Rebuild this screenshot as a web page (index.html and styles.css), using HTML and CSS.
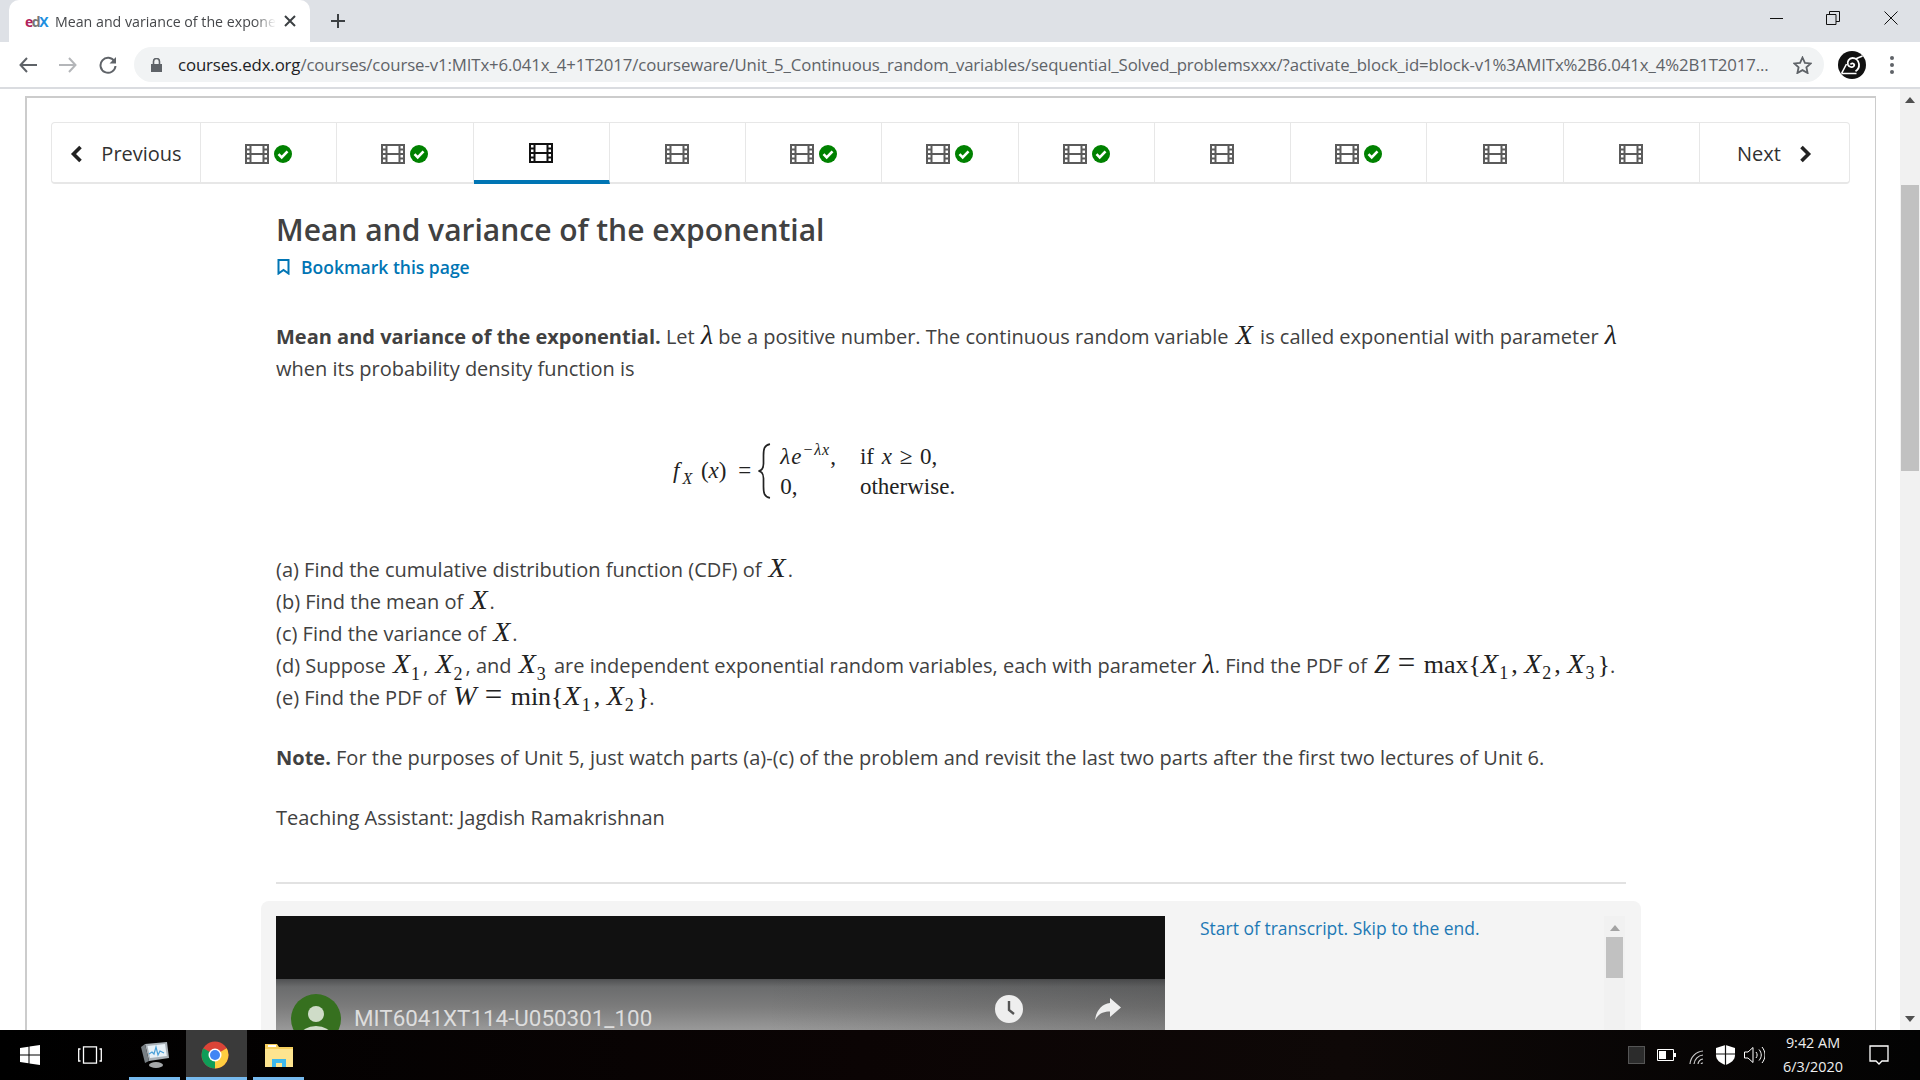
FILE: index.html
```html
<!DOCTYPE html>
<html lang="en">

<head>
    <meta charset="UTF-8">
    <title>Mean and variance of the exponential</title>
    <link rel="stylesheet" href="styles.css">
</head>

<body>
    <svg class="defs" width="0" height="0">
        <symbol id="film" viewBox="0 0 24 20">
            <path d="M1 1h22v18H1z M5.500 1v18 M18.500 1v18 M5.500 10h13 M1 5.500h4.500 M1 10h4.500 M1 14.500h4.500 M18.500 5.500H23 M18.500 10H23 M18.500 14.500H23" fill="none" stroke="currentColor" stroke-width="2"/>
        </symbol>
        <symbol id="check" viewBox="0 0 18 18">
            <circle cx="9" cy="9" r="9" fill="#008100"/>
            <path d="M4.500 9.200l3.200 3.200 5.800-6" fill="none" stroke="#fff" stroke-width="2.600"/>
        </symbol>
    </svg>

    <!-- browser chrome -->
    <div class="tabstrip">
        <div class="tab">
            <span class="favicon"><span class="fav-e">e</span><span class="fav-d">d</span><span class="fav-x">X</span></span>
            <span class="tab-title">Mean and variance of the expone</span>
            <svg class="tab-close" width="12" height="12" viewBox="0 0 12 12"><path d="M1 1l10 10M11 1L1 11" stroke="#3c4043" stroke-width="2"/></svg>
        </div>
        <svg class="new-tab" width="16" height="16" viewBox="0 0 16 16"><path d="M8 1v14M1 8h14" stroke="#3c4043" stroke-width="2"/></svg>
        <div class="win-controls">
            <svg class="win-min" width="14" height="14" viewBox="0 0 14 14"><path d="M0 7.500h13" stroke="#111" stroke-width="1"/></svg>
            <svg width="14" height="14" viewBox="0 0 14 14"><path d="M.5 3.500h9.500v10H.5z M3.500 3.500V.5h10v10H10" fill="none" stroke="#111"/></svg>
            <svg width="14" height="14" viewBox="0 0 14 14"><path d="M.5.5l13 13M13.500.5l-13 13" stroke="#111"/></svg>
        </div>
    </div>

    <div class="toolbar">
        <svg class="tb-icon" width="18" height="16" viewBox="0 0 18 16"><path d="M8 1L1.500 8 8 15M2 8h16" fill="none" stroke="#5f6368" stroke-width="2"/></svg>
        <svg class="tb-icon" width="18" height="16" viewBox="0 0 18 16"><path d="M10 1l6.500 7-6.500 7M16 8H0" fill="none" stroke="#b4b6b9" stroke-width="2"/></svg>
        <svg class="tb-icon" width="18" height="18" viewBox="0 0 18 18"><path d="M15.500 5.500A7.500 7.500 0 1 0 16.500 10" fill="none" stroke="#5f6368" stroke-width="2"/><path d="M17 1v6.500h-6.500z" fill="#5f6368"/></svg>
        <div class="omnibox">
            <svg class="lock" width="11" height="14" viewBox="0 0 11 14"><path d="M0 6h11v8H0z" fill="#5f6368"/><path d="M2.500 6V3.500a3 3 0 0 1 6 0V6" fill="none" stroke="#5f6368" stroke-width="1.600"/></svg>
            <span class="url"><span class="url-host">courses.edx.org</span>/courses/course-v1:MITx+6.041x_4+1T2017/courseware/Unit_5_Continuous_random_variables/sequential_Solved_problemsxxx/?activate_block_id=block-v1%3AMITx%2B6.041x_4%2B1T2017...</span>
            <svg class="star" width="19" height="18" viewBox="0 0 19 18"><path d="M9.500 1.500l2.400 5.300 5.800.6-4.300 3.900 1.200 5.700-5.100-2.900-5.100 2.900 1.200-5.700L1.300 7.400l5.800-.6z" fill="none" stroke="#5f6368" stroke-width="1.800"/></svg>
        </div>
        <svg class="profile" width="28" height="28" viewBox="0 0 28 28">
            <circle cx="14" cy="14" r="14" fill="#111"/>
            <path d="M3.500 22.500L8.500 13M3.500 22.500h15" fill="none" stroke="#fff" stroke-width="1.600"/>
            <path d="M12.500 13.500a2 2 0 0 1 3.800.5c-.3 2.500-4.800 3.200-6.300-.2-1.200-3 1-6.800 4.500-6.800 3.200 0 6 2.300 6.500 6 .3 3-1.500 6-3.500 7.200 M18.500 7.500l6-2.500" fill="none" stroke="#fff" stroke-width="1.800"/>
        </svg>
        <div class="kebab"><i></i><i></i><i></i></div>
    </div>

    <div class="viewport">
        <div class="page">
            <div class="sheet">
                <nav class="seq-nav">
                    <div class="seq-btn seq-prev">
                        <svg width="13" height="18" viewBox="0 0 13 18"><path d="M10.500 2L3.500 9l7 7" fill="none" stroke="#222" stroke-width="3.600"/></svg>
                        <span>Previous</span>
                    </div>
                    <div class="seq-item"><svg class="film"><use href="#film"/></svg><svg class="ok"><use href="#check"/></svg></div>
                    <div class="seq-item"><svg class="film"><use href="#film"/></svg><svg class="ok"><use href="#check"/></svg></div>
                    <div class="seq-item active"><svg class="film"><use href="#film"/></svg></div>
                    <div class="seq-item"><svg class="film"><use href="#film"/></svg></div>
                    <div class="seq-item"><svg class="film"><use href="#film"/></svg><svg class="ok"><use href="#check"/></svg></div>
                    <div class="seq-item"><svg class="film"><use href="#film"/></svg><svg class="ok"><use href="#check"/></svg></div>
                    <div class="seq-item"><svg class="film"><use href="#film"/></svg><svg class="ok"><use href="#check"/></svg></div>
                    <div class="seq-item"><svg class="film"><use href="#film"/></svg></div>
                    <div class="seq-item"><svg class="film"><use href="#film"/></svg><svg class="ok"><use href="#check"/></svg></div>
                    <div class="seq-item"><svg class="film"><use href="#film"/></svg></div>
                    <div class="seq-item"><svg class="film"><use href="#film"/></svg></div>
                    <div class="seq-btn seq-next">
                        <span>Next</span>
                        <svg width="13" height="18" viewBox="0 0 13 18"><path d="M2.500 2l7 7-7 7" fill="none" stroke="#222" stroke-width="3.600"/></svg>
                    </div>
                </nav>

                <div class="unit">
                    <h1>Mean and variance of the exponential</h1>
                    <div class="bookmark">
                        <svg width="13" height="16" viewBox="0 0 13 16"><path d="M1.500 1h10v13.500l-5-3.500-5 3.500z" fill="none" stroke="#0075b4" stroke-width="2"/></svg>
                        <span>Bookmark this page</span>
                    </div>

                    <p class="intro"><b>Mean and variance of the exponential.</b> Let <span class="m lam">λ</span> be a positive number. The continuous random variable <span class="m">X</span> is called exponential with parameter <span class="m lam">λ</span> when its probability density function is</p>

                    <div class="formula">
                        <div class="f-lhs"><i class="f-f">f<sub>X</sub></i> (<i>x</i>) <span class="f-eq">=</span></div>
                        <svg class="brace" width="14" height="56" viewBox="0 0 14 54" preserveAspectRatio="none"><path d="M13 1C7 2 6.500 6 6.500 12v8c0 4-2 6.500-5 7 3 .5 5 3 5 7v8c0 6 .5 10 6.500 11" fill="none" stroke="#222" stroke-width="1.700"/></svg>
                        <div class="f-cases">
                            <div><i class="f-exp">λe<sup>−λx</sup></i>,</div>
                            <div class="f-cond">if <i>x</i> ≥ 0,</div>
                            <div>0,</div>
                            <div>otherwise.</div>
                        </div>
                    </div>

                    <ul class="parts">
                        <li>(a) Find the cumulative distribution function (CDF) of <span class="m">X</span>.</li>
                        <li>(b) Find the mean of <span class="m">X</span>.</li>
                        <li>(c) Find the variance of <span class="m">X</span>.</li>
                        <li>(d) Suppose <span class="m">X<sub>1</sub></span>, <span class="m">X<sub>2</sub></span>, and <span class="m">X<sub>3</sub></span> are independent exponential random variables, each with parameter <span class="m lam">λ</span>. Find the PDF of <span class="m">Z</span> <span class="mr"><span class="eq">=</span> max{<i>X</i><sub>1</sub>, <i>X</i><sub>2</sub>, <i>X</i><sub>3</sub>}</span>.</li>
                        <li>(e) Find the PDF of <span class="m">W</span> <span class="mr"><span class="eq">=</span> min{<i>X</i><sub>1</sub>, <i>X</i><sub>2</sub>}</span>.</li>
                    </ul>

                    <p class="note"><b>Note.</b> For the purposes of Unit 5, just watch parts (a)-(c) of the problem and revisit the last two parts after the first two lectures of Unit 6.</p>
                    <p class="ta">Teaching Assistant: Jagdish Ramakrishnan</p>
                    <hr>

                    <div class="video-wrap">
                        <div class="video">
                            <div class="video-black"></div>
                            <div class="video-bar">
                                <svg class="yt-avatar" width="50" height="50" viewBox="0 0 50 50"><circle cx="25" cy="25" r="25" fill="#36701f"/><circle cx="25" cy="20" r="8" fill="#cfdcc8"/><ellipse cx="25" cy="41" rx="15" ry="9" fill="#cfdcc8"/></svg>
                                <span class="yt-title">MIT6041XT114-U050301_100</span>
                                <svg class="yt-clock" width="28" height="28" viewBox="0 0 28 28"><circle cx="14" cy="14" r="14" fill="#eee"/><path d="M14 6v9l5 4" fill="none" stroke="#555" stroke-width="2.400"/></svg>
                                <svg class="yt-share" width="26" height="22" viewBox="0 0 26 22"><path d="M15 0l11 9.500L15 19v-5.500C9 13.500 4 15 0 22 1.500 12 7 6 15 5z" fill="#eee"/></svg>
                            </div>
                        </div>
                        <div class="transcript">
                            <a class="skip">Start of transcript. Skip to the end.</a>
                        </div>
                        <div class="mini-scroll">
                            <div class="arrow-up small"></div>
                            <div class="mini-thumb"></div>
                        </div>
                    </div>
                </div>
            </div>
        </div>
        <div class="scrollbar">
            <div class="arrow-up"></div>
            <div class="thumb"></div>
            <div class="arrow-down"></div>
        </div>
    </div>

    <!-- windows taskbar -->
    <div class="taskbar">
        <svg class="tk-start" width="20" height="20" viewBox="0 0 20 20"><path d="M0 3l8.500-1.200v7.700H0z M9.500 1.600L20 0v9.500H9.500z M0 10.500h8.500v7.700L0 17z M9.500 10.500H20V20L9.500 18.400z" fill="#fff"/></svg>
        <svg class="tk-view" width="24" height="18" viewBox="0 0 24 18"><path d="M5.500.8h13v16.400h-13z M2.500 3H.7v12h1.800 M21.500 3h1.800v12h-1.800" fill="none" stroke="#fff" stroke-width="1.300"/></svg>
        <div class="tk-app tk-first">
            <svg width="28" height="26" viewBox="0 0 28 26">
                <path d="M4 2l22-2 2 16-20 3z" fill="#aab2b8"/><path d="M6.500 4l17.500-2 1.800 12-16.800 2z" fill="#e8f1f7"/>
                <path d="M8 12l3-2 2 2 2-7 2 8 2-4 4 2" fill="none" stroke="#4ba0d8" stroke-width="1.200"/>
                <path d="M0 5l4-3 4 17-4 2z" fill="#777e83"/><ellipse cx="15" cy="23" rx="7" ry="3" fill="#a5a8aa"/>
            </svg>
        </div>
        <div class="tk-app tk-active">
            <svg width="28" height="28" viewBox="0 0 28 28">
                <circle cx="14" cy="14" r="13.500" fill="#db4437"/>
                <path d="M14 14L2.300 7.300A13.500 13.500 0 0 0 14 27.500z" fill="#0f9d58"/>
                <path d="M14 14V27.500A13.500 13.500 0 0 0 25.700 7.300z" fill="#ffcd40"/>
                <circle cx="14" cy="14" r="6.500" fill="#fff"/><circle cx="14" cy="14" r="5" fill="#4285f4"/>
            </svg>
        </div>
        <div class="tk-app">
            <svg width="28" height="24" viewBox="0 0 28 24">
                <path d="M0 1h12l2 3h14v20H0z" fill="#f6cf5d"/><path d="M0 6h28v18H0z" fill="#fde48f"/>
                <path d="M3 2h8v2H3z" fill="#fff"/>
                <path d="M7 24v-8h14v8h-4v-4h-6v4z" fill="#3db8ec"/>
            </svg>
        </div>

        <div class="tray">
            <div class="tray-box"></div>
            <svg width="19" height="12" viewBox="0 0 19 12"><path d="M.5.500h16v11H.5z" fill="none" stroke="#fff"/><path d="M17 4h2v4h-2z M2 2h7v8H2z" fill="#fff"/></svg>
            <svg width="16" height="17" viewBox="0 0 16 17"><path d="M1 16a2 2 0 0 1 2 1 M1 12a6 6 0 0 1 5 5 M1 8a10 10 0 0 1 9 9 M1 4a14 14 0 0 1 13 13" fill="none" stroke="#ccc" stroke-width="1.200" transform="matrix(-1 0 0 1 16 0)"/></svg>
            <svg width="19" height="20" viewBox="0 0 19 20"><path d="M9.500 0L19 3v7c0 5-4 8-9.500 10C4 18 0 15 0 10V3z" fill="#fff"/><path d="M9.500 0v20M0 9h19" stroke="#111" stroke-width="1.200"/></svg>
            <svg class="tray-vol" width="21" height="18" viewBox="0 0 21 18"><path d="M.5 6h3.500l5-4.500v15L4 12H.5z M12 6c1.500 2 1.500 4 0 6 M15 3.500c3 3.500 3 7.500 0 11 M18 1c4 5 4 11 0 16" fill="none" stroke="#fff"/></svg>
        </div>
        <div class="clock"><span>9:42 AM</span><span>6/3/2020</span></div>
        <svg class="notify" width="20" height="20" viewBox="0 0 20 20"><path d="M1 1h18v15h-6l-3 3-3-3H1z" fill="none" stroke="#fff" stroke-width="1.300"/></svg>
    </div>
</body>

</html>
```

FILE: styles.css
```css
html,
body {
    margin: 0;
    padding: 0;
    height: 100%;
    overflow: hidden;
}

body {
    display: flex;
    flex-direction: column;
    width: 1920px;
    height: 1080px;
    font-family: "Open Sans", sans-serif;
    color: #414141;
    background: #fff;
}

.defs {
    position: absolute;
}

/* browser chrome */
.tabstrip {
    flex: none;
    height: 42px;
    display: flex;
    align-items: center;
    background: #dee1e6;
    padding-left: 9px;
}

.tab {
    width: 301px;
    height: 42px;
    box-sizing: border-box;
    padding: 0 14px 0 16px;
    display: flex;
    align-items: center;
    background: #fff;
    border-radius: 10px 10px 0 0;
}

.favicon {
    width: 30px;
    flex: none;
    font-size: 14px;
    font-weight: 700;
    letter-spacing: -1.500px;
}

.fav-e {
    color: #b0215c;
}

.fav-d {
    color: #777;
}

.fav-x {
    color: #1d8fe0;
}

.tab-title {
    flex: 1;
    overflow: hidden;
    white-space: nowrap;
    font-size: 14.200px;
    color: #45474a;
    -webkit-mask-image: linear-gradient(to right, #000 90%, transparent 100%);
    mask-image: linear-gradient(to right, #000 90%, transparent 100%);
}

.tab-close {
    margin-left: 8px;
    flex: none;
}

.new-tab {
    margin-left: 20px;
}

.win-controls {
    margin-left: auto;
    margin-bottom: 6px;
    padding-right: 22px;
    display: flex;
    gap: 44px;
}

.win-min {
    margin-right: -2px;
}

.toolbar {
    flex: none;
    height: 45px;
    box-sizing: content-box;
    display: flex;
    align-items: center;
    background: #fff;
    border-bottom: 2px solid #dadce0;
    padding-left: 19px;
}

.tb-icon {
    margin-right: 22px;
    flex: none;
}

.omnibox {
    margin-left: -5px;
    width: 1690px;
    height: 35px;
    box-sizing: border-box;
    padding: 0 12px 0 17px;
    display: flex;
    align-items: center;
    background: #f1f3f4;
    border-radius: 18px;
}

.lock {
    flex: none;
    margin-right: 16px;
}

.url {
    flex: 1;
    white-space: nowrap;
    overflow: hidden;
    font-size: 16.800px;
    letter-spacing: -0.113px;
    color: #5f6368;
}

.url-host {
    color: #202124;
}

.star {
    flex: none;
    margin-left: 22px;
}

.profile {
    flex: none;
    margin-left: 14px;
}

.kebab {
    margin-left: 24px;
    display: flex;
    flex-direction: column;
    gap: 3px;
}

.kebab i {
    width: 4px;
    height: 4px;
    border-radius: 50%;
    background: #5f6368;
}

/* page area */
.viewport {
    flex: 1;
    min-height: 0;
    display: flex;
    overflow: hidden;
}

.page {
    flex: 1;
    padding: 7px 24px 0 25px;
    min-width: 0;
}

.sheet {
    height: 100%;
    border: 1px solid #ccc;
    border-width: 2px 1px 0 2px;
    box-sizing: border-box;
    padding: 24px 25px 0 24px;
}

.seq-nav {
    display: flex;
    height: 62px;
    box-sizing: border-box;
    border: 1px solid #e7e7e7;
    border-bottom-width: 2px;
    border-radius: 4px;
}

.seq-btn {
    width: 149px;
    flex: none;
    display: flex;
    align-items: center;
    justify-content: center;
    gap: 18px;
    padding-top: 2px;
    box-sizing: border-box;
    font-size: 20px;
    color: #313131;
}

.seq-prev {
    border-right: 1px solid #e7e7e7;
}

.seq-item {
    flex: 1;
    display: flex;
    align-items: center;
    justify-content: center;
    gap: 5px;
    color: #5b5b5b;
    border-right: 1px solid #e7e7e7;
    margin-bottom: -2px;
    box-sizing: border-box;
}

.seq-item.active {
    color: #111;
    border-bottom: 4px solid #0075b4;
    padding-top: 2px;
    padding-bottom: 0;
}

.film {
    width: 24px;
    height: 20px;
}

.ok {
    width: 18px;
    height: 18px;
}

.unit {
    margin-left: 225px;
    width: 1350px;
}

h1 {
    margin: 28px 0 0;
    font-size: 30px;
    line-height: 36px;
    font-weight: 600;
    color: #414141;
}

.bookmark {
    margin-top: 6px;
    height: 26px;
    display: flex;
    align-items: center;
    gap: 11px;
    font-size: 17.500px;
    font-weight: 600;
    color: #0075b4;
}

.bookmark svg {
    margin-left: 1px;
}

p {
    margin: 0;
    font-size: 20px;
    line-height: 32px;
}

p b {
    font-weight: 700;
}

.intro {
    margin-top: 41px;
}

/* math is set by hand in the serif, spaced out to the width of the TeX glyphs */
.m,
.mr,
.formula {
    font-family: "Liberation Serif", serif;
}

.m,
.mr {
    line-height: 0;
    color: #222;
}

.m {
    font-size: 28px;
    font-style: italic;
    padding-left: 2px;
    letter-spacing: 2px;
}

.m.lam {
    padding-left: 1px;
    letter-spacing: 0;
}

.mr {
    font-size: 26px;
}

.mr i {
    font-size: 28px;
    letter-spacing: 2px;
}

.eq {
    margin: 0 2px 0 1px;
    font-size: 31px;
}

.m sub,
.mr sub {
    margin-left: -1px;
    padding-right: 3px;
    font-size: 18px;
    font-style: normal;
    line-height: 0;
    letter-spacing: 0;
}

.formula {
    height: 169px;
    box-sizing: border-box;
    padding: 3px 0 0 397px;
    display: flex;
    align-items: center;
    font-size: 23px;
    color: #222;
}

.f-lhs sub {
    font-size: 16px;
    line-height: 0;
}

.f-f {
    letter-spacing: 3px;
}

.f-eq {
    margin-left: 6px;
}

.f-lhs {
    margin-right: 6px;
}

.f-cases {
    margin-left: 9px;
    display: grid;
    grid-template-columns: auto auto;
    column-gap: 24px;
    row-gap: 3px;
    line-height: 27px;
}

.f-exp {
    letter-spacing: 1px;
}

.f-cases sup {
    font-size: 16px;
    line-height: 0;
}

.f-cond {
    word-spacing: 2px;
}

.parts {
    list-style: none;
    margin: 0;
    padding: 0;
    font-size: 20px;
    line-height: 32px;
}

.note {
    margin-top: 28px;
}

.ta {
    margin-top: 28px;
}

hr {
    margin: 48px 0 0;
    border: 0;
    border-top: 2px solid #e2e2e2;
}

.video-wrap {
    margin: 17px -15px 0;
    padding: 15px 16px 15px 15px;
    height: 300px;
    box-sizing: border-box;
    display: flex;
    background: #f4f4f4;
    border-radius: 8px;
}

.video {
    width: 889px;
    flex: none;
    background: #777;
}

.video-black {
    height: 63px;
    background: #111;
}

.video-bar {
    height: 200px;
    padding: 15px 0 0 15px;
    box-sizing: border-box;
    display: flex;
    align-items: flex-start;
    background: linear-gradient(90deg, rgba(40, 40, 40, 0) 55%, rgba(40, 40, 40, .22) 100%),
        linear-gradient(#4f5052, #6b6c6d 4%, #7c7c7c 14%, #9a9a9a 26%);
}

.yt-title {
    margin: 13px 0 0 13px;
    font-family: Roboto, sans-serif;
    font-size: 22.400px;
    line-height: 22px;
    color: #ddd;
    white-space: nowrap;
}

.yt-clock {
    margin: 1px 0 0 343px;
}

.yt-share {
    margin: 4px 0 0 72px;
}

.transcript {
    flex: 1;
    padding: 0 0 0 35px;
}

.skip {
    display: block;
    margin-top: -1px;
    font-size: 17.500px;
    line-height: 26px;
    color: #1d79b5;
}

.mini-scroll {
    width: 21px;
    flex: none;
    background: #f1f1f1;
    display: flex;
    flex-direction: column;
    align-items: center;
}

.arrow-up,
.arrow-down {
    width: 0;
    height: 0;
    border-left: 5px solid transparent;
    border-right: 5px solid transparent;
}

.arrow-up {
    border-bottom: 6px solid #505050;
}

.arrow-down {
    border-top: 6px solid #505050;
}

.arrow-up.small {
    margin-top: 9px;
    border-bottom-color: #a3a3a3;
}

.mini-thumb {
    margin-top: 6px;
    width: 17px;
    height: 41px;
    background: #c1c1c1;
}

.scrollbar {
    flex: none;
    width: 20px;
    background: #f1f1f1;
    display: flex;
    flex-direction: column;
    align-items: center;
    box-sizing: border-box;
    padding: 8px 0;
}

.thumb {
    margin-top: 82px;
    width: 18px;
    height: 286px;
    background: #c1c1c1;
}

.arrow-down {
    margin-top: auto;
}

/* taskbar */
.taskbar {
    flex: none;
    height: 50px;
    display: flex;
    align-items: center;
    background: linear-gradient(90deg, #000 0, #0b0404 45%, #0e0807 70%, #030303 100%);
    color: #fff;
}

.tk-start {
    margin-left: 20px;
    flex: none;
}

.tk-view {
    margin-left: 38px;
    margin-right: 27px;
    flex: none;
}

.tk-app {
    width: 51px;
    height: 50px;
    box-sizing: border-box;
    border-bottom: 3px solid #76b9ed;
    margin-right: 6px;
    padding-top: 3px;
    display: flex;
    align-items: center;
    justify-content: center;
}

.tk-first {
    margin-right: 6px;
}

.tk-active {
    width: 61px;
    padding-right: 3px;
    background: #3a3a3a;
}

.tray {
    margin-left: auto;
    display: flex;
    align-items: center;
    gap: 12px;
}

.tray-vol {
    margin-left: -3px;
}

.tray-box {
    width: 15px;
    height: 16px;
    background: #2c2c2c;
    border: 1px solid #555;
}

.clock {
    margin-left: 15px;
    width: 66px;
    display: flex;
    flex-direction: column;
    align-items: center;
    font-size: 14.400px;
    line-height: 24px;
    color: #eee;
    white-space: nowrap;
}

.notify {
    margin: 0 31px 0 23px;
    flex: none;
}
```
